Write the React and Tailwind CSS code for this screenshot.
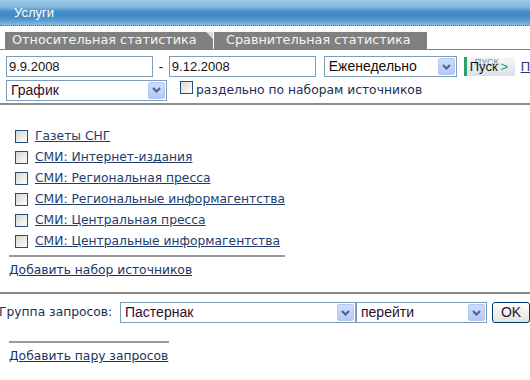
import React from "react";

function Chevron() {
  return (
    <svg width="9" height="6" viewBox="0 0 9 6">
      <path d="M1 1 L4.5 4.5 L8 1" fill="none" stroke="#4d6185" strokeWidth="2" />
    </svg>
  );
}

function XPSelect({ w, text, textCls }) {
  return (
    <div className={`flex h-[21px] items-center border border-[#7f9db9] bg-white ${w}`}>
      <span className={`flex-1 truncate pl-[4px] font-['Liberation_Sans',sans-serif] text-[14px] leading-[19px] text-[#2e0f2e] ${textCls || ""}`}>
        {text}
      </span>
      <span className="mr-[1px] flex h-[17px] w-[17px] items-center justify-center rounded-[2px] border border-[#b5c7f3] bg-linear-to-b from-[#d0dcfc] to-[#b4c8f7]">
        <Chevron />
      </span>
    </div>
  );
}

function XPCheck() {
  return (
    <span className="inline-block h-[13px] w-[13px] shrink-0 border border-[#1c5180] bg-linear-to-br from-[#d6d6d0] to-white" />
  );
}

export default function App() {
  const sources = [
    "Газеты СНГ",
    "СМИ: Интернет-издания",
    "СМИ: Региональная пресса",
    "СМИ: Региональные информагентства",
    "СМИ: Центральная пресса",
    "СМИ: Центральные информагентства",
  ];
  return (
    <div className="h-[380px] w-[530px] overflow-hidden bg-white font-['DejaVu_Sans',sans-serif] text-[12px] text-black">
      <div className="flex h-[26px] items-center border-b border-dotted border-[#2f76b6] bg-[linear-gradient(to_bottom,#9ccae8_0%,#84b8df_28%,#4a90c8_45%,#3f89c5_62%,#5b9dd0_82%,#86bbe0_100%)] pl-[14px] font-['Liberation_Sans',sans-serif] text-[13px] text-white">
        Услуги
      </div>

      <div className="mt-[6px] flex h-[18px] border-b border-[#808080]">
        <div className="relative ml-[5px] flex w-[208px] items-center bg-[#808080] pl-[7px] text-[12.8px] leading-none text-[#f4f4f4]">
          Относительная статистика
          <span className="absolute right-0 top-0 h-0 w-0 border-l-[7px] border-t-[7px] border-l-transparent border-t-[#dadada]" />
        </div>
        <div className="ml-[1px] flex w-[213px] items-center bg-[#808080] pl-[12px] text-[12.8px] leading-none text-[#f4f4f4]">
          Сравнительная статистика
        </div>
      </div>

      <div className="mt-[6px] flex h-[21px] items-center pl-[6px]">
        <div className="flex h-[21px] w-[147px] items-center border border-[#7f9db9] pl-[2px] font-['Liberation_Sans',sans-serif] text-[13px] text-[#111]">
          9.9.2008
        </div>
        <span className="flex w-[16px] justify-center font-['Liberation_Sans',sans-serif] text-[13px]">-</span>
        <div className="flex h-[21px] w-[147px] items-center border border-[#7f9db9] pl-[2px] font-['Liberation_Sans',sans-serif] text-[13px] text-[#111]">
          9.12.2008
        </div>
        <div className="ml-[8px]">
          <XPSelect w="w-[133px]" text="Еженедельно" textCls="text-[#111]" />
        </div>
        <div className="relative ml-[7px] flex h-[19px] w-[51px] items-center border-l-[3px] border-[#2aa070] bg-linear-to-b from-[#f6f8f6] to-[#d6e2ea] pl-[3px] font-['Liberation_Sans',sans-serif] text-[13px] leading-none text-[#111]">
          <span className="absolute left-[8px] top-[1px] text-[9px] leading-none text-[#7a8aa8]">ПУСК</span>
          <span className="relative">Пуск</span>
          <span className="relative ml-[3px] text-[#2a9a6a]">&gt;</span>
        </div>
        <span className="ml-[6px] font-['Liberation_Sans',sans-serif] text-[13px] text-[#1e3d6e] underline">П</span>
      </div>

      <div className="mt-[3px] flex h-[20px] items-center pl-[6px]">
        <XPSelect w="w-[161px] h-[20px]" text="График" />
        <span className="ml-[13px]"><XPCheck /></span>
        <span className="ml-[3px] text-[12.3px] text-[#1b2f55]">раздельно по наборам источников</span>
      </div>

      <div className="mt-[3px] h-[2px] w-full bg-[#8c8c8c]" />

      <div className="mt-[21px] flex flex-col">
        {sources.map((s) => (
          <div key={s} className="flex h-[21px] items-center pl-[15px]">
            <XPCheck />
            <a className="ml-[7px] text-[12.3px] leading-none text-[#1e3d6e] underline">{s}</a>
          </div>
        ))}
      </div>

      <div className="ml-[9px] mt-[3px] h-[2px] w-[276px] bg-[#9a9a9a]" />
      <div className="ml-[9px] mt-[5px] h-[16px] text-[12.3px] leading-[16px] text-[#1a3564] underline">
        Добавить набор источников
      </div>

      <div className="mt-[14px] h-[2px] w-full bg-[#8c8c8c]" />

      <div className="mt-[8px] flex h-[21px] items-center">
        <span className="-ml-[1px] w-[121px] text-[12.3px] text-[#1b2f55]">Группа запросов:</span>
        <XPSelect w="w-[236px]" text="Пастернак" />
        <XPSelect w="w-[131px]" text="перейти" />
        <div className="ml-[5px] flex h-[21px] w-[38px] items-center justify-center rounded-[3px] border border-[#003c74] bg-linear-to-b from-white to-[#e6e3d6] font-['Liberation_Sans',sans-serif] text-[14px] text-[#2e0f2e]">
          OK
        </div>
      </div>

      <div className="ml-[9px] mt-[18px] h-[2px] w-[160px] bg-[#9a9a9a]" />
      <div className="ml-[9px] mt-[5px] h-[16px] text-[12.3px] leading-[16px] text-[#1a3564] underline">
        Добавить пару запросов
      </div>
    </div>
  );
}
